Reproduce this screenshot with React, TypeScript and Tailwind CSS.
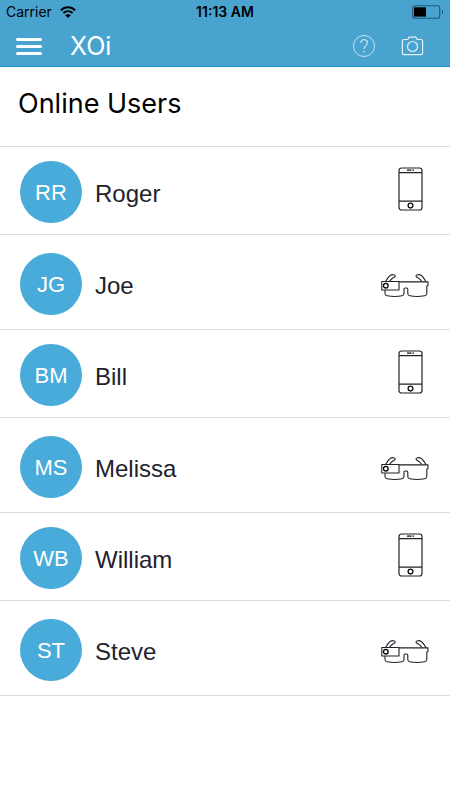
type IDevice = 'phone' | 'glasses';
type IUser = { name: string; initials: string; device: IDevice };

const users: IUser[] = [
  { name: 'Roger', initials: 'RR', device: 'phone' },
  { name: 'Joe', initials: 'JG', device: 'glasses' },
  { name: 'Bill', initials: 'BM', device: 'phone' },
  { name: 'Melissa', initials: 'MS', device: 'glasses' },
  { name: 'William', initials: 'WB', device: 'phone' },
  { name: 'Steve', initials: 'ST', device: 'glasses' },
];

const PhoneIcon = () => (
  <svg className="w-[25px] h-11" viewBox="0 0 25 44" fill="none" role="img" aria-label="Phone">
    <rect x="1" y="1" width="23" height="42" rx="2.5" stroke="#22222a" strokeWidth="1.2" />
    <path d="M1 5.6h23M1 34.2h23" stroke="#22222a" strokeWidth="1.2" />
    <path d="M9 3.2h4.5M14.5 3.2h1.5" stroke="#111" strokeWidth="1.2" />
    <circle cx="12.5" cy="38.6" r="2.4" stroke="#111" strokeWidth="1.3" />
  </svg>
);

const GlassesIcon = () => (
  <svg
    className="w-12 h-6"
    viewBox="0 0 48 24"
    fill="none"
    stroke="#22222a"
    strokeWidth="1.1"
    strokeLinejoin="round"
    role="img"
    aria-label="Smart glasses"
  >
    <path d="M4.5 7.500C6 5 7.500 2.500 9.500 1.200c1.500-.9 4.500-.7 4.700.6.200 1.300-1.600 1.700-2.700 2.400C10.300 5 9.500 6.200 8.500 7.500" />
    <path d="M45 7.500C43.500 5 42 2.500 40 1.200c-1.500-.9-4.800-.7-5 .6-.200 1.300 1.600 1.700 2.700 2.400 1.200.8 2.300 2 3.300 3.300" />
    <rect x=".8" y="7.500" width="17.200" height="8.500" />
    <circle cx="4.800" cy="11.700" r="2.300" stroke="#000" strokeWidth="1.300" />
    <path d="M18 7.900h29v3.600l-1.200.8v7.200c0 1.400-.8 2-2.200 2.300-4.500.9-10.500.9-14.800 0-1.400-.3-2-1-2-2.300v-4.300c0-.7-.4-1.200-1.200-1.200h-1.400c-.8 0-1.200.5-1.200 1.200v4.300c0 1.300-.6 2-2 2.300-4.300.9-10.300.9-14.800 0-1.400-.3-2.200-1-2.200-2.300V16" />
  </svg>
);

const StatusBar = () => (
  <div className="grid grid-cols-3 items-center h-6 px-1.5 text-sm text-black">
    <div className="flex items-center gap-2">
      <span>Carrier</span>
      <svg className="w-4 h-3" viewBox="0 0 16 12" fill="none" stroke="#000" strokeWidth="2" aria-hidden="true">
        <path d="M.8 4.300C5 .2 11 .2 15.200 4.300M3.400 7c2.700-2.500 6.500-2.500 9.200 0" />
        <path d="M8 12 5.200 9.200c1.600-1.400 4-1.400 5.600 0z" fill="#000" stroke="none" />
      </svg>
    </div>
    <span className="text-center font-semibold">11:13 AM</span>
    <svg className="w-8 h-3.5 justify-self-end" viewBox="0 0 32 14" fill="none" aria-hidden="true">
      <rect x=".7" y=".7" width="27" height="12.600" rx="2" stroke="#245a75" strokeWidth="1.100" />
      <rect x="2" y="2.300" width="12" height="9.300" fill="#000" />
      <path d="M30 5v4c1.200-.8 1.200-3.200 0-4z" fill="#153a4c" />
    </svg>
  </div>
);

const Header = () => (
  <header className="bg-[#48a3cf] border-b border-[#168fc9]">
    <StatusBar />
    <div className="flex items-center h-[42px] pt-1 pb-0.5 pl-4 pr-[26px] text-white">
      <button type="button" aria-label="Menu" className="flex flex-col gap-1 w-[26px]">
        <span className="w-full h-[3px] rounded-sm bg-white" />
        <span className="w-full h-[3px] rounded-sm bg-white" />
        <span className="w-full h-[3px] rounded-sm bg-white" />
      </button>
      <span className="ml-7 text-[25px] leading-8">XOi</span>
      <div className="flex items-center gap-[25px] ml-auto">
        <button type="button" aria-label="Help">
          <svg className="block w-6 h-6" viewBox="0 0 24 24" fill="none" stroke="#c5e3f1">
            <circle cx="12" cy="12" r="10.500" />
            <path d="M8.700 9c0-2 1.400-3.400 3.400-3.400s3.300 1.300 3.300 3.100c0 2.900-3.300 2.900-3.300 6.200" strokeWidth="1.200" />
            <path d="M12.100 16.700v1.700" strokeWidth="1.400" />
          </svg>
        </button>
        <button type="button" aria-label="Camera">
          <svg className="block w-[23px] h-6" viewBox="0 0 23 24" fill="none" stroke="#e1f1f8" strokeWidth="1.200">
            <path d="M3 5.500h3.800l1.300-2.300h6.800l1.300 2.300H20c1 0 1.600.6 1.600 1.600v12c0 1-.6 1.600-1.600 1.600H3c-1 0-1.600-.6-1.600-1.600v-12c0-1 .6-1.600 1.600-1.600z" />
            <circle cx="11.500" cy="12.500" r="5" />
          </svg>
        </button>
      </div>
    </div>
  </header>
);

const UserRow = ({ user }: { user: IUser }) => {
  const isPhone = user.device === 'phone';

  return (
    <li
      className={`flex items-start border-b border-[#dcdcdc] pl-5 ${
        isPhone ? 'pt-3.5 pb-[11px] pr-[27px]' : 'pt-[18px] pb-3.5 pr-[21px]'
      }`}
    >
      <span className="flex items-center justify-center shrink-0 size-[62px] rounded-full bg-[#49abd9] text-white text-[22px]">
        {user.initials}
      </span>
      <span className="ml-[13px] pt-[17px] text-2xl text-[#22222c]">{user.name}</span>
      <span className={isPhone ? 'ml-auto pt-1.5' : 'ml-auto pt-[21px]'}>
        {isPhone ? <PhoneIcon /> : <GlassesIcon />}
      </span>
    </li>
  );
};

const App = () => {
  return (
    <div className="min-h-screen bg-white font-['Inter',sans-serif]">
      <Header />
      <main>
        <h1 className="px-[18px] pt-[19px] pb-6 text-[27px] leading-9 text-black border-b border-[#dcdcdc]">
          Online Users
        </h1>
        <ul className="font-['Liberation_Sans',Arial,sans-serif]">
          {users.map((user) => (
            <UserRow key={user.name} user={user} />
          ))}
        </ul>
      </main>
    </div>
  );
};

export default App;
